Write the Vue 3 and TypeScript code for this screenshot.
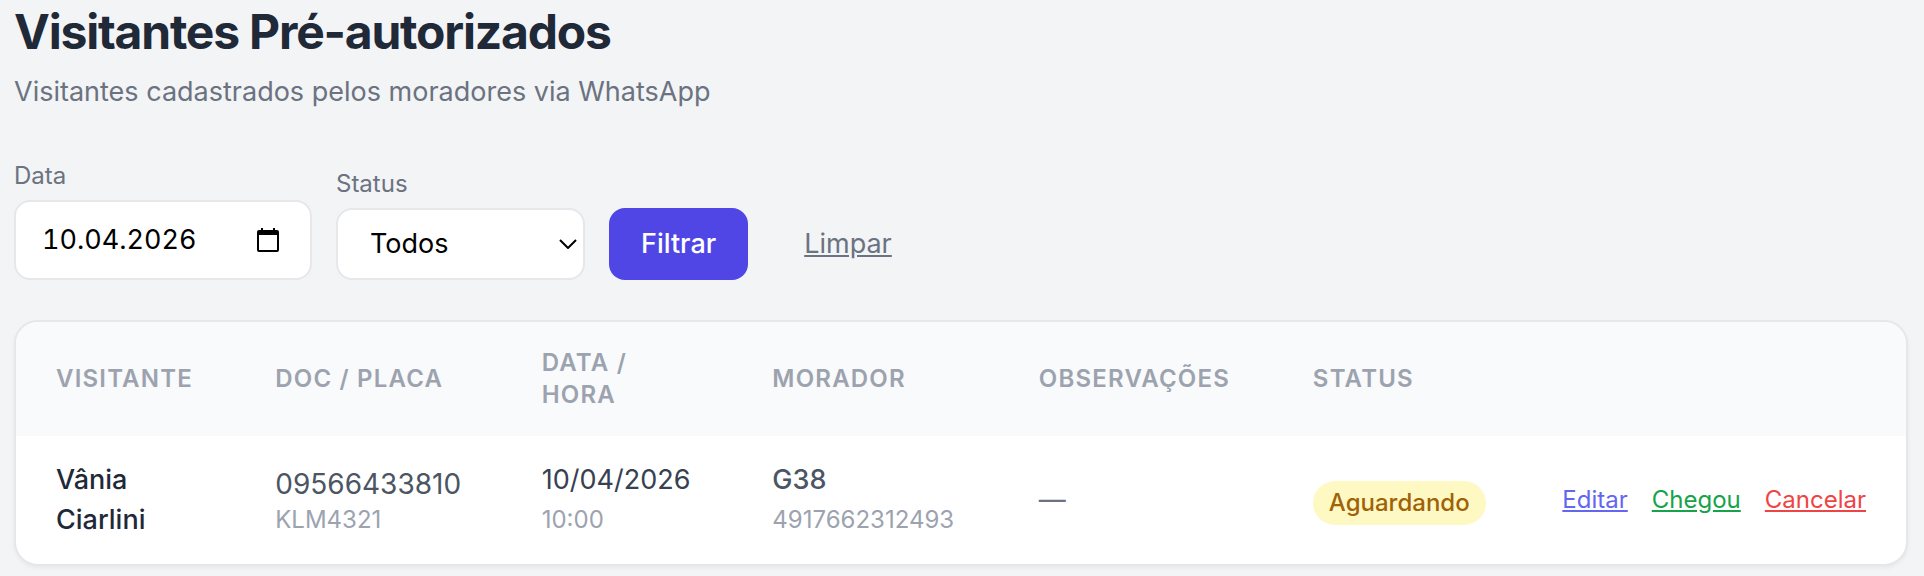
<script setup lang="ts">
import { ref } from 'vue'

interface Visitor {
  id: number
  name: string
  doc: string
  plate: string
  date: string
  time: string
  unit: string
  phone: string
  notes: string
  status: string
}

const date = ref('10.04.2026')
const status = ref('todos')

const columns: string[] = ['Visitante', 'Doc / Placa', 'Data / Hora', 'Morador', 'Observações', 'Status']

const visitors = ref<Visitor[]>([
  {
    id: 1,
    name: 'Vânia Ciarlini',
    doc: '09566433810',
    plate: 'KLM4321',
    date: '10/04/2026',
    time: '10:00',
    unit: 'G38',
    phone: '4917662312493',
    notes: '',
    status: 'Aguardando',
  },
])

function clearFilters(): void {
  date.value = ''
  status.value = 'todos'
}
</script>

<template>
  <main class="page">
    <header>
      <h1>Visitantes Pré-autorizados</h1>
      <p class="subtitle">Visitantes cadastrados pelos moradores via WhatsApp</p>
    </header>

    <form class="filters" @submit.prevent>
      <div class="field">
        <label for="filter-date">Data</label>
        <div class="date-box">
          <input id="filter-date" v-model="date" type="text" inputmode="numeric" autocomplete="off" />
          <button class="picker" type="button" aria-label="Abrir calendário">
            <svg viewBox="0 0 22 24" width="22" height="24" aria-hidden="true">
              <path
                fill-rule="evenodd"
                d="M4 0h2v2h10V0h2v2h2a2 2 0 0 1 2 2v18a2 2 0 0 1-2 2H2a2 2 0 0 1-2-2V4a2 2 0 0 1 2-2h2zM2 7v15h18V7z"
              />
            </svg>
          </button>
        </div>
      </div>

      <div class="field">
        <label for="filter-status">Status</label>
        <div class="select-box">
          <select id="filter-status" v-model="status">
            <option value="todos">Todos</option>
            <option value="aguardando">Aguardando</option>
            <option value="chegou">Chegou</option>
            <option value="cancelado">Cancelado</option>
          </select>
          <svg class="chevron" viewBox="0 0 18 10" width="18" height="10" aria-hidden="true">
            <path d="M1 1l8 8 8-8" fill="none" stroke="#000" stroke-width="2" />
          </svg>
        </div>
      </div>

      <button class="submit" type="submit">Filtrar</button>
      <a class="clear" href="#" @click.prevent="clearFilters">Limpar</a>
    </form>

    <section class="card">
      <table>
        <colgroup>
          <col class="c-name" />
          <col class="c-doc" />
          <col class="c-date" />
          <col class="c-unit" />
          <col class="c-notes" />
          <col class="c-status" />
          <col />
        </colgroup>
        <thead>
          <tr>
            <th v-for="column in columns" :key="column" scope="col">{{ column }}</th>
            <th scope="col" aria-label="Ações"></th>
          </tr>
        </thead>
        <tbody>
          <tr v-for="visitor in visitors" :key="visitor.id">
            <td class="name">{{ visitor.name }}</td>
            <td class="doc">
              <div class="number">{{ visitor.doc }}</div>
              <div class="plate">{{ visitor.plate }}</div>
            </td>
            <td class="when">
              <div>{{ visitor.date }}</div>
              <div class="minor">{{ visitor.time }}</div>
            </td>
            <td class="unit">
              <div class="strong">{{ visitor.unit }}</div>
              <div class="minor">{{ visitor.phone }}</div>
            </td>
            <td class="notes">{{ visitor.notes || '—' }}</td>
            <td class="state"><span class="badge">{{ visitor.status }}</span></td>
            <td>
              <div class="actions">
                <a class="edit" href="#">Editar</a>
                <a class="arrived" href="#">Chegou</a>
                <a class="cancel" href="#">Cancelar</a>
              </div>
            </td>
          </tr>
        </tbody>
      </table>
    </section>
  </main>
</template>

<style>
body {
  margin: 0;
  background: #f3f4f6;
}
</style>

<style scoped>
.page {
  padding: 0 16px 10px 14px;
  font-family: Inter, "Liberation Sans", sans-serif;
  font-size: 27px;
  line-height: 40px;
  color: #1f2937;
}

.page * {
  box-sizing: border-box;
}

h1 {
  margin: 0;
  font-size: 48px;
  line-height: 64px;
  font-weight: 700;
  letter-spacing: -0.025em;
}

.subtitle {
  margin: 8px 0 48px;
  color: #6b7280;
}

.filters {
  display: flex;
  align-items: flex-end;
  gap: 24px;
  margin-bottom: 40px;
}

.field {
  display: flex;
  flex-direction: column;
  gap: 8px;
}

label {
  font-size: 24px;
  line-height: 32px;
  color: #6b7280;
}

input,
select,
button {
  font: inherit;
  color: #000;
}

.date-box,
.select-box {
  display: grid;
  align-items: center;
  border: 2px solid #e5e7eb;
  border-radius: 16px;
  background: #fff;
}

.date-box {
  grid-template-columns: 1fr auto;
  width: 298px;
  height: 80px;
  padding: 0 31px 0 26px;
}

.date-box input {
  width: 100%;
  min-width: 0;
  padding: 0;
  border: 0;
  outline: 0;
  background: transparent;
  font-variant-numeric: tabular-nums;
}

.picker {
  display: flex;
  padding: 0;
  border: 0;
  background: transparent;
}

.select-box {
  width: 249px;
  height: 72px;
}

.select-box select {
  grid-area: 1 / 1;
  width: 100%;
  height: 100%;
  padding: 0 40px 0 32px;
  border: 0;
  outline: 0;
  border-radius: 14px;
  background: transparent;
  appearance: none;
}

.chevron {
  grid-area: 1 / 1;
  justify-self: end;
  margin-right: 6px;
  pointer-events: none;
}

.submit {
  height: 72px;
  padding: 0 32px;
  border: 0;
  border-radius: 16px;
  background: #4f46e5;
  color: #fff;
  font-weight: 500;
}

.clear {
  padding: 16px 32px;
  color: #6b7280;
}

a {
  text-decoration: underline;
}

.card {
  overflow: hidden;
  border: 2px solid #e5e7eb;
  border-radius: 24px;
  background: #fff;
  box-shadow: 0 2px 4px rgba(0, 0, 0, 0.05);
}

table {
  width: 100%;
  table-layout: fixed;
  border-collapse: collapse;
  text-align: left;
}

.c-name {
  width: 11.6%;
}

.c-doc,
.c-unit {
  width: 14.1%;
}

.c-date {
  width: 12.2%;
}

.c-notes {
  width: 14.5%;
}

.c-status {
  width: 13.4%;
}

thead {
  background: #f9fafb;
}

th {
  padding: 25px 40px;
  font-size: 24px;
  line-height: 32px;
  font-weight: 600;
  letter-spacing: 0.05em;
  text-transform: uppercase;
  color: #9ca3af;
}

td {
  padding: 24px 40px;
  vertical-align: middle;
}

td.state {
  padding-top: 30px;
}

.name {
  font-weight: 500;
}

.doc,
.unit {
  color: #4b5563;
}

.number {
  font-size: 28px;
}

.when {
  color: #374151;
}

.notes {
  color: #6b7280;
}

.strong {
  font-weight: 500;
}

.plate {
  font-size: 24px;
  line-height: 32px;
  color: #9ca3af;
}

.minor {
  font-size: 24px;
  color: #9ca3af;
}

.badge {
  display: inline-block;
  padding: 6px 16px;
  border-radius: 22px;
  background: #fef9c3;
  color: #a16207;
  font-size: 24px;
  line-height: 32px;
  font-weight: 500;
}

.actions {
  display: flex;
  justify-content: flex-end;
  gap: 24px;
  font-size: 24px;
}

.edit {
  color: #6366f1;
}

.arrived {
  color: #16a34a;
}

.cancel {
  color: #ef4444;
}
</style>
